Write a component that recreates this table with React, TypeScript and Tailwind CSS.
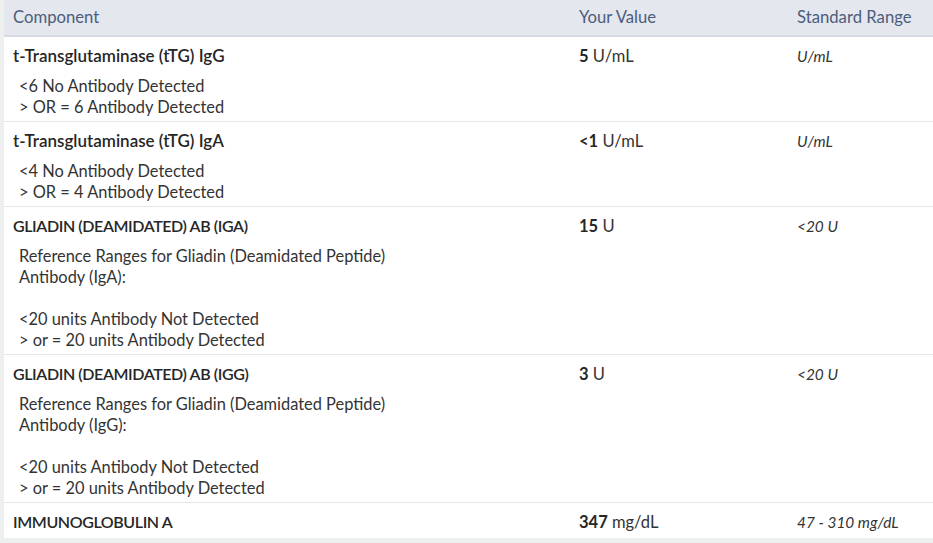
import React from "react";

type Result = {
  name: string;
  value: string;
  unit: string;
  range: string;
  note?: string;
};

const results: Result[] = [
  {
    name: "t-Transglutaminase (tTG) IgG",
    value: "5",
    unit: "U/mL",
    range: "U/mL",
    note: "<6 No Antibody Detected\n> OR = 6 Antibody Detected",
  },
  {
    name: "t-Transglutaminase (tTG) IgA",
    value: "<1",
    unit: "U/mL",
    range: "U/mL",
    note: "<4 No Antibody Detected\n> OR = 4 Antibody Detected",
  },
  {
    name: "GLIADIN (DEAMIDATED) AB (IGA)",
    value: "15",
    unit: "U",
    range: "<20 U",
    note: "Reference Ranges for Gliadin (Deamidated Peptide)\nAntibody (IgA):\n\n<20 units Antibody Not Detected\n> or = 20 units Antibody Detected",
  },
  {
    name: "GLIADIN (DEAMIDATED) AB (IGG)",
    value: "3",
    unit: "U",
    range: "<20 U",
    note: "Reference Ranges for Gliadin (Deamidated Peptide)\nAntibody (IgG):\n\n<20 units Antibody Not Detected\n> or = 20 units Antibody Detected",
  },
  {
    name: "IMMUNOGLOBULIN A",
    value: "347",
    unit: "mg/dL",
    range: "47 - 310 mg/dL",
  },
];

const cols = "grid grid-cols-[566px_218px_1fr]";

export default function App() {
  return (
    <div
      className="w-[933px] h-[543px] overflow-hidden bg-[#eeefef] pl-[4px]"
      style={{ fontFamily: "Lato, 'Open Sans', sans-serif" }}
    >
      <div className="bg-white text-[#333]">
        {/* header */}
        <div
          className={`${cols} h-[37px] items-center bg-[#e4e7ee] border-b-2 border-[#d6dae2] text-[16.7px] text-[#4c5d7d]`}
        >
          <div className="px-[9px]">Component</div>
          <div className="px-[9px]">Your Value</div>
          <div className="px-[9px]">Standard Range</div>
        </div>

        {results.map((r, i) => {
          const caps = r.name === r.name.toUpperCase();
          return (
            <div
              key={i}
              className={`${cols} pt-[8px] ${
                i < results.length - 1 ? "pb-[4px] border-b border-[#e6e6e6]" : "pb-[5px]"
              }`}
            >
              <div className="px-[9px]">
                <div
                  className={`font-semibold leading-[22px] text-[#262626] ${
                    caps ? "text-[16px] tracking-[-0.4px]" : "text-[17px]"
                  }`}
                >
                  {r.name}
                </div>
                {r.note && (
                  <div className="mt-[8px] pl-[6px] text-[16.4px] leading-[21px] whitespace-pre-line">
                    {r.note}
                  </div>
                )}
              </div>
              <div className="px-[9px] text-[16.5px] leading-[22px]">
                <span className="font-bold text-[#262626]">{r.value}</span> {r.unit}
              </div>
              <div className="px-[9px] text-[15.4px] leading-[22px] italic">{r.range}</div>
            </div>
          );
        })}
      </div>
    </div>
  );
}
